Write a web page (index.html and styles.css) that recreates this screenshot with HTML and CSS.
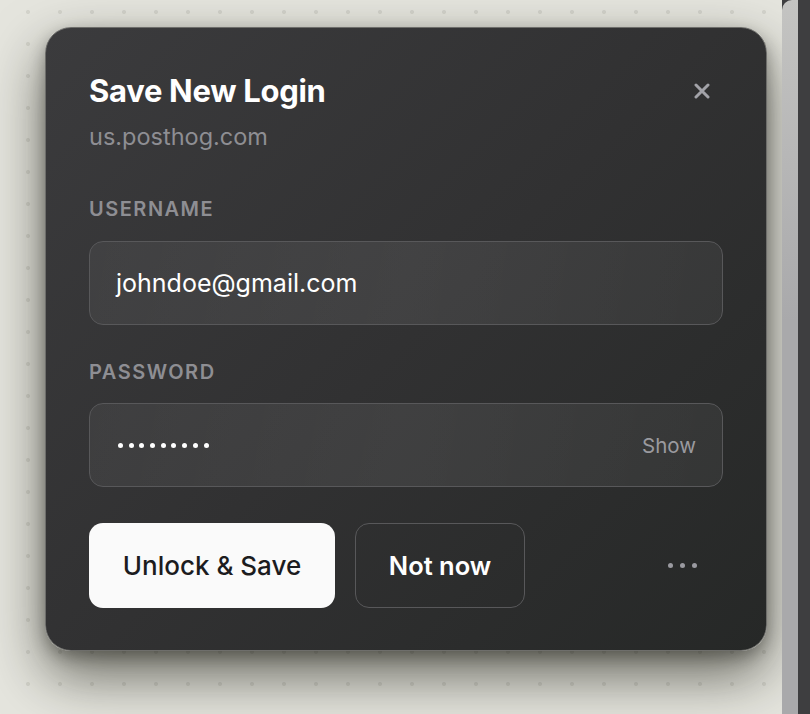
FILE: index.html
```html
<!DOCTYPE html>
<html lang="en">
<head>
<meta charset="utf-8">
<title>Save New Login</title>
<link rel="stylesheet" href="styles.css">
</head>
<body>
<div class="stage">
  <section class="card">
    <header class="head">
      <div class="titles">
        <h1 class="title">Save New Login</h1>
        <div class="site">us.posthog.com</div>
      </div>
      <button class="close" aria-label="Close">
        <svg width="16" height="16" viewBox="0 0 16 16"><path d="M2 2 L14 14 M14 2 L2 14" stroke="#a2a2a8" stroke-width="3" stroke-linecap="round"/></svg>
      </button>
    </header>
    <label class="label">USERNAME</label>
    <div class="field"><span class="value">johndoe@gmail.com</span></div>
    <label class="label">PASSWORD</label>
    <div class="field pw">
      <span class="dots"><i></i><i></i><i></i><i></i><i></i><i></i><i></i><i></i><i></i></span>
      <span class="show">Show</span>
    </div>
    <div class="actions">
      <button class="btn primary">Unlock &amp; Save</button>
      <button class="btn ghost">Not now</button>
      <span class="more"><i></i><i></i><i></i></span>
    </div>
  </section>
</div>
<div class="strip"></div>
<div class="edge"></div>
</body>
</html>
```
FILE: styles.css
```css
html, body { margin: 0; height: 100%; }
body {
  display: flex;
  font-family: Inter, "Noto Sans", sans-serif;
  background: #3f3f41;
  overflow: hidden;
}
.stage {
  flex: 0 0 782px;
  height: 714px;
  background-color: #e5e5de;
  background-image: radial-gradient(circle at center, #d4d4cc 0, #d4d4cc 1.6px, rgba(212,212,204,0) 2.4px);
  background-size: 32px 32px;
  background-position: 12px -4px;
  padding: 27px 0 0 45px;
  box-sizing: border-box;
}
.strip {
  flex: 0 0 16px;
  height: 714px;
  background: linear-gradient(#c4c4c2, #a9a9ab 45%, #a9a9ab);
  border-top-left-radius: 10px;
}
.edge { flex: 0 0 12px; height: 714px; background: #3e3e40; }
.card {
  width: 722px;
  height: 624px;
  box-sizing: border-box;
  border: 1.5px solid #6e6e6b;
  border-radius: 26px;
  background: linear-gradient(135deg, #3b3b3d 0%, #313132 50%, #262827 100%);
  box-shadow: 0 24px 56px rgba(20,20,10,0.6), 0 6px 16px rgba(0,0,0,0.3);
  padding: 0 43px;
  color: #fff;
}
.head {
  display: flex;
  justify-content: space-between;
  align-items: flex-start;
  padding-top: 41px;
}
.title {
  margin: 0;
  font-size: 31px;
  line-height: 44px;
  font-weight: 700;
  letter-spacing: -0.3px;
}
.site {
  margin-top: 10px;
  font-size: 23.5px;
  line-height: 28px;
  color: #8e8e93;
}
.close {
  background: none;
  border: 0;
  padding: 0;
  margin: 14px 13px 0 0;
  width: 16px;
  height: 16px;
  display: block;
}
.close svg { display: block; }
.label {
  display: block;
  margin-top: 46px;
  font-size: 20px;
  line-height: 24px;
  font-weight: 600;
  letter-spacing: 1.5px;
  color: #8e8e93;
}
.field {
  margin-top: 20px;
  height: 84px;
  box-sizing: border-box;
  border: 1.5px solid #58585a;
  border-radius: 14px;
  background: linear-gradient(100deg, rgba(255,255,255,0.05), rgba(255,255,255,0.08) 50%, rgba(255,255,255,0.05));
  display: flex;
  align-items: center;
  padding: 0 26px;
}
.field + .label { margin-top: 35px; }
.field.pw { margin-top: 19px; }
.value { font-size: 25px; color: #fff; }
.pw { justify-content: space-between; }
.dots { display: flex; gap: 5.7px; padding-left: 2px; }
.dots i { width: 5px; height: 5px; border-radius: 50%; background: #fff; }
.show { font-size: 20.5px; color: #9a9a9f; }
.actions {
  display: flex;
  align-items: center;
  margin-top: 36px;
}
.btn {
  height: 85px;
  border-radius: 14px;
  font-family: inherit;
  font-size: 26px;
  font-weight: 500;
  padding: 0;
  box-sizing: border-box;
}
.primary {
  width: 246px;
  background: #fafafa;
  color: #1c1c1e;
  border: 0;
}
.ghost {
  width: 170px;
  margin-left: 20px;
  background: transparent;
  color: #fff;
  border: 1.5px solid #58585a;
  font-size: 25.5px;
  font-weight: 600;
}
.more {
  margin-left: auto;
  margin-right: 26px;
  display: flex;
  gap: 7px;
}
.more i { width: 5px; height: 5px; border-radius: 50%; background: #9a9aa0; }
```
